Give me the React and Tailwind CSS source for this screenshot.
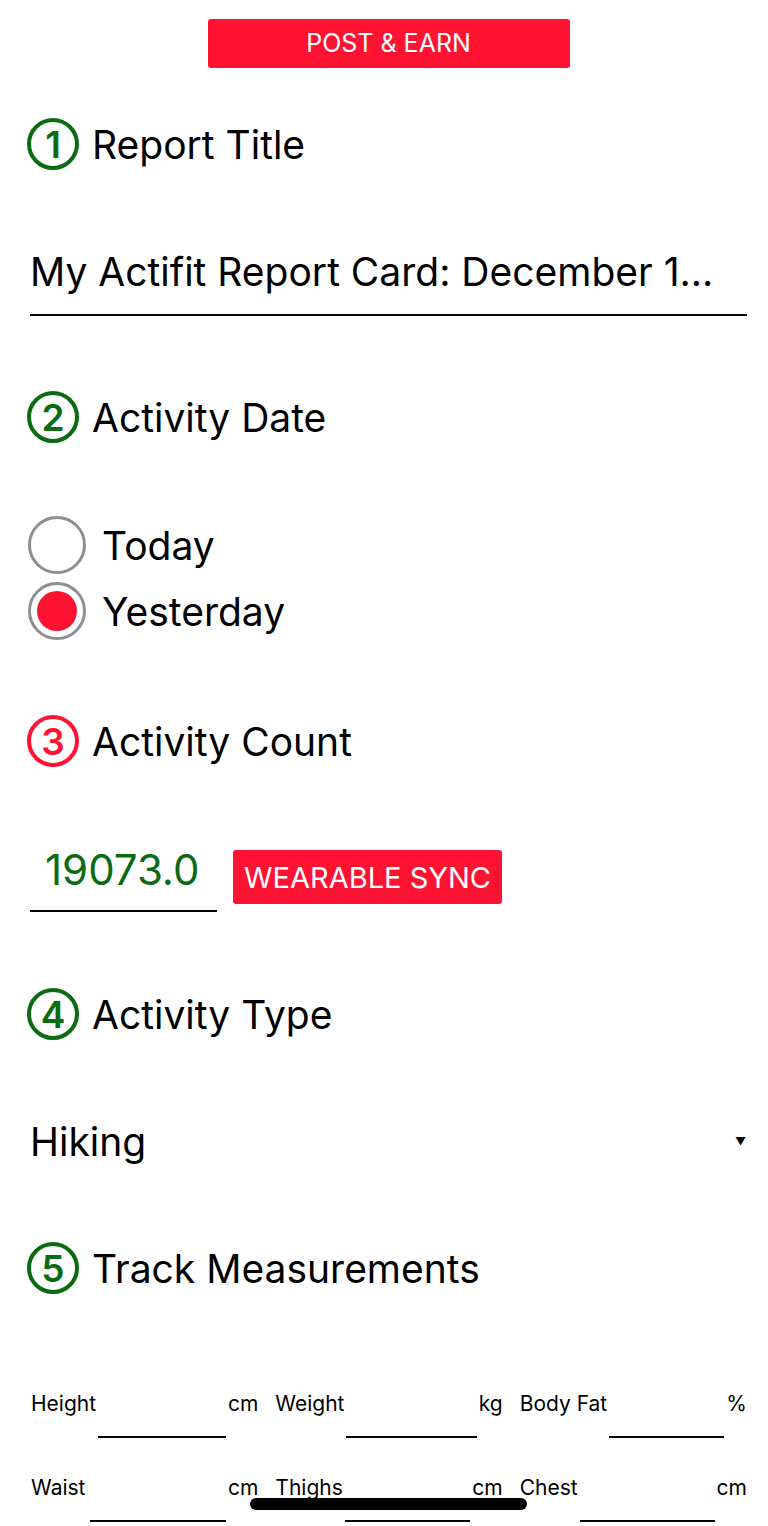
const RED = 'bg-[#ff1232]'

const StepBadge = ({ n, red }) => (
  <div
    className={`w-[52px] h-[52px] rounded-full border-[4px] flex items-center justify-center text-[37px] leading-none font-semibold ${
      red ? 'border-[#ff1232] text-[#ff1232]' : 'border-[#0b6b12] text-[#0b6b12]'
    }`}
  >
    {n}
  </div>
)

const Heading = ({ n, red, children, className = '' }) => (
  <div className={`flex items-center gap-[13px] h-[52px] ${className}`}>
    <StepBadge n={n} red={red} />
    <span className="text-[39px] leading-none text-black">{children}</span>
  </div>
)

const Radio = ({ checked, label }) => (
  <div className="flex items-center gap-[16px] h-[58px]">
    <div className="w-[58px] h-[58px] rounded-full border-[3px] border-[#8e8e93] flex items-center justify-center">
      {checked && <div className="w-[40px] h-[40px] rounded-full bg-[#ff1232]"></div>}
    </div>
    <span className="text-[39px] leading-none text-black">{label}</span>
  </div>
)

const Measure = ({ label, unit, gap = 'ml-[2px]' }) => (
  <div className="flex items-start">
    <span className="text-[21px] leading-[28px] text-black">{label}</span>
    <div className={`flex-1 h-[48px] border-b-[2px] border-black ${gap}`}></div>
    <span className="text-[21px] leading-[28px] text-black pl-[2px]">{unit}</span>
  </div>
)

export default function App() {
  return (
    <div
      className="relative w-[768px] h-[1526px] overflow-hidden bg-white"
      style={{ fontFamily: 'Inter, "Noto Sans", "Liberation Sans", sans-serif' }}
    >
      <div className="pl-[30px] pr-[21px] pt-[19px]">
        {/* Post button */}
        <div className="flex justify-center">
          <button className={`w-[362px] h-[49px] ${RED} rounded-[3px] text-white text-[25px] leading-none`}>
            POST &amp; EARN
          </button>
        </div>

        {/* 1 */}
        <Heading n="1" className="mt-[50px] -ml-[3px]">Report Title</Heading>
        <div className="mt-[79px] border-b-[2px] border-black pb-[19px]">
          <div className="text-[39px] leading-[46px] text-black whitespace-nowrap">
            My Actifit Report Card: December 1...
          </div>
        </div>

        {/* 2 */}
        <Heading n="2" className="mt-[75px] -ml-[3px]">Activity Date</Heading>
        <div className="mt-[73px] flex flex-col gap-[8px] -ml-[2px]">
          <Radio label="Today" />
          <Radio checked label="Yesterday" />
        </div>

        {/* 3 */}
        <Heading n="3" red className="mt-[75px] -ml-[3px]">Activity Count</Heading>
        <div className="mt-[83px] flex items-start gap-[16px]">
          <div className="w-[187px] h-[62px] border-b-[2px] border-black">
            <div className="pl-[15px] text-[42px] leading-[40px] text-[#0b6b12]">19073.0</div>
          </div>
          <button className={`h-[54px] px-[11px] ${RED} rounded-[3px] text-white text-[29px] leading-none`}>
            WEARABLE SYNC
          </button>
        </div>

        {/* 4 */}
        <Heading n="4" className="mt-[76px] -ml-[3px]">Activity Type</Heading>
        <div className="mt-[78px] flex items-center justify-between h-[46px]">
          <span className="text-[39px] leading-none text-black">Hiking</span>
          <span className="text-[11px] text-black pr-[1px]">▼</span>
        </div>

        {/* 5 */}
        <Heading n="5" className="mt-[78px] -ml-[3px]">Track Measurements</Heading>
        <div className="mt-[96px] grid grid-cols-3 gap-x-[17px] gap-y-[36px] pl-[1px]">
          <Measure label="Height" unit="cm" />
          <Measure label="Weight" unit="kg" />
          <Measure label="Body Fat" unit="%" />
          <Measure label="Waist" unit="cm" gap="ml-[5px]" />
          <Measure label="Thighs" unit="cm" />
          <Measure label="Chest" unit="cm" />
        </div>
      </div>

      {/* home indicator */}
      <div className="absolute left-[250px] top-[1498px] w-[277px] h-[12px] rounded-full bg-black"></div>
    </div>
  )
}
